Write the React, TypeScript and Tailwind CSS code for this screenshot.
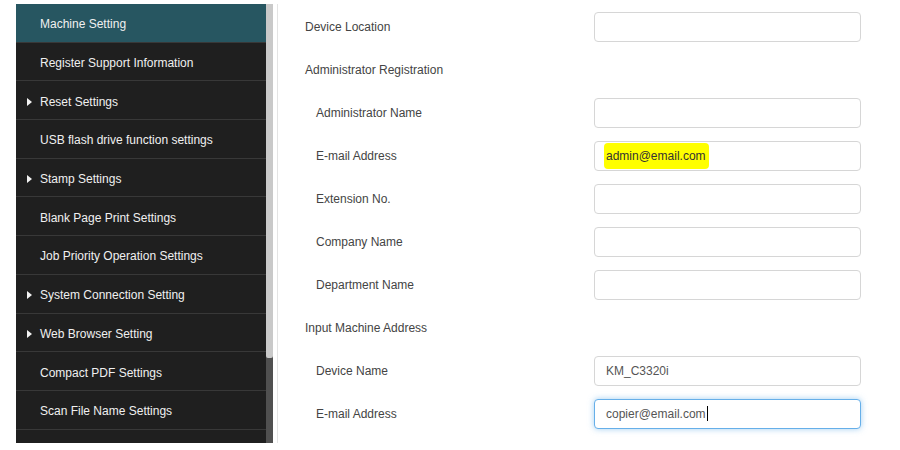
import React from "react";

const menuItems = [
  { label: "Machine Setting", arrow: false, active: true },
  { label: "Register Support Information", arrow: false },
  { label: "Reset Settings", arrow: true },
  { label: "USB flash drive function settings", arrow: false },
  { label: "Stamp Settings", arrow: true },
  { label: "Blank Page Print Settings", arrow: false },
  { label: "Job Priority Operation Settings", arrow: false },
  { label: "System Connection Setting", arrow: true },
  { label: "Web Browser Setting", arrow: true },
  { label: "Compact PDF Settings", arrow: false },
  { label: "Scan File Name Settings", arrow: false },
  { label: "", arrow: false },
];

type Row =
  | { kind: "header"; label: string }
  | { kind: "field"; label: string; value?: string; sub?: boolean; highlight?: boolean; focused?: boolean };

const rows: Row[] = [
  { kind: "field", label: "Device Location" },
  { kind: "header", label: "Administrator Registration" },
  { kind: "field", label: "Administrator Name", sub: true },
  { kind: "field", label: "E-mail Address", sub: true, value: "admin@email.com", highlight: true },
  { kind: "field", label: "Extension No.", sub: true },
  { kind: "field", label: "Company Name", sub: true },
  { kind: "field", label: "Department Name", sub: true },
  { kind: "header", label: "Input Machine Address" },
  { kind: "field", label: "Device Name", sub: true, value: "KM_C3320i" },
  { kind: "field", label: "E-mail Address", sub: true, value: "copier@email.com", focused: true },
];

function MenuItem({ label, arrow, active }: { label: string; arrow: boolean; active?: boolean }) {
  return (
    <div
      className={`flex h-[38.7px] shrink-0 items-center border-b border-[#383838] pt-[3px] ${
        active ? "bg-[#275661]" : "bg-[#1f1f1f]"
      }`}
    >
      <div className="flex w-[24px] justify-end pr-[8px]">
        {arrow && (
          <svg width="5" height="8" viewBox="0 0 5 8">
            <path d="M0 0 L5 4 L0 8 Z" fill="#f2f2f2" />
          </svg>
        )}
      </div>
      <span className="text-[12px] text-[#f0f0f0]">{label}</span>
    </div>
  );
}

function Field({ row }: { row: Extract<Row, { kind: "field" }> }) {
  return (
    <div className="flex h-[43px] items-center">
      <div className={`w-[289px] text-[12px] text-[#444] ${row.sub ? "pl-[11px]" : ""}`}>{row.label}</div>
      <div
        className={`flex h-[30px] w-[267px] items-center rounded-[4px] border bg-white px-[11px] text-[12px] text-[#555] ${
          row.focused
            ? "border-[#66afe9] shadow-[0_0_6px_rgba(102,175,233,0.6)]"
            : "border-[#d6d6d6]"
        }`}
      >
        {row.value &&
          (row.highlight ? (
            <span className="-ml-[2px] rounded-[4px] bg-[#ffff00] py-[4px] pl-[2px] pr-[3px] text-[#333]">
              {row.value}
            </span>
          ) : (
            <span>{row.value}</span>
          ))}
        {row.focused && <span className="ml-[1px] h-[15px] w-px bg-black" />}
      </div>
    </div>
  );
}

export default function App() {
  return (
    <div
      className="flex h-[450px] w-[900px] overflow-hidden bg-white"
      style={{ fontFamily: '"Liberation Sans", Arial, sans-serif' }}
    >
      <div className="ml-[16px] mt-[4px] flex h-[439px]">
        <div className="flex w-[250px] flex-col overflow-hidden bg-[#1f1f1f]">
          {menuItems.map((item, index) => (
            <MenuItem key={index} label={item.label} arrow={item.arrow} active={item.active} />
          ))}
        </div>
        <div className="flex w-[7px] flex-col bg-[#505050]">
          <div className="h-[354px] rounded-b-[2px] bg-[#c9c9c9]" />
        </div>
        <div className="ml-[4px] w-px bg-[#e4e4e4]" />
      </div>
      <div className="mt-[5px] flex flex-col pl-[27px]">
        {rows.map((row, index) =>
          row.kind === "header" ? (
            <div key={index} className="flex h-[43px] items-center text-[12px] text-[#444]">
              {row.label}
            </div>
          ) : (
            <Field key={index} row={row} />
          ),
        )}
      </div>
    </div>
  );
}
